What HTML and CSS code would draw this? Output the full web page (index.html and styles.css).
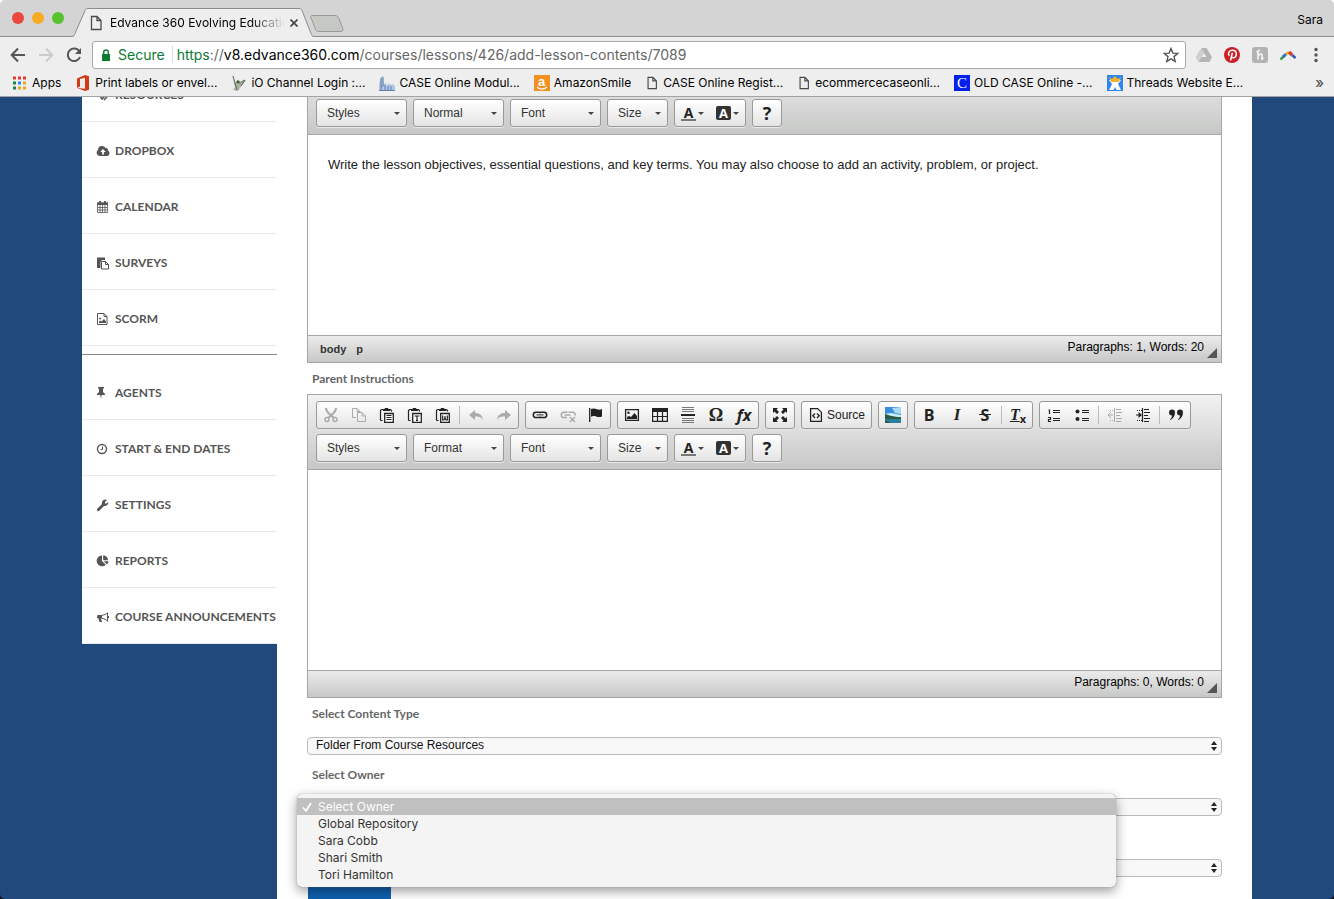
FILE: index.html
```html
<!DOCTYPE html>
<html lang="en">
<head>
    <meta charset="UTF-8">
    <meta name="viewport" content="width=device-width, initial-scale=1.0">
    <title>Edvance 360 Evolving Education</title>
    <link rel="stylesheet" href="styles.css">
</head>
<body>
<!-- editor icons -->
<svg class="sprite" xmlns="http://www.w3.org/2000/svg">
    <symbol id="page" viewBox="0 0 12 16"><path d="M1.5 1.5h5.500l4 4v9h-9.500zM7 1.500v4h4" fill="none" stroke="#4a4a4a" stroke-width="1.300"/></symbol>
    <symbol id="cut" viewBox="0 0 16 16"><path d="M3 1c0 3 2 5 5 7.500M13 1c0 3-2 5-5 7.500L5 11M8 8.500L11 11" fill="none" stroke="currentColor" stroke-width="2"/><circle cx="4" cy="12.500" r="2" fill="none" stroke="currentColor" stroke-width="1.400"/><circle cx="12" cy="12.500" r="2" fill="none" stroke="currentColor" stroke-width="1.400"/></symbol>
    <symbol id="copy" viewBox="0 0 16 16"><path d="M5 10.500H1.500v-9h4.500l3 3v1M6 1.500v3h3M6.500 5.500h4.500l3.500 3.500v5.500h-8zM11 5.500v3.500h3.500" fill="none" stroke="currentColor"/></symbol>
    <symbol id="clip" viewBox="0 0 16 16"><path d="M3.500 13.500h-1.500l-.5-.5V3.500l1-1h1.500M10 2.500h1.500l1 1v1" fill="none" stroke="currentColor" stroke-width="1.200"/><path d="M4 4V2h1.500l.5-1h3l.5 1H11v2z" fill="currentColor"/><path d="M5.700 6.500h8.600v8.800H5.700z" fill="#fff" stroke="currentColor" stroke-width="1.300"/></symbol>
    <symbol id="paste" viewBox="0 0 16 16"><use href="#clip"/><path d="M7.500 8.500h5M7.500 10.500h5M7.500 12.500h5" stroke="currentColor"/></symbol>
    <symbol id="paste-text" viewBox="0 0 16 16"><use href="#clip"/><path d="M7.500 9h5M10 9v5M9 13.500h2" stroke="currentColor" stroke-width="1.200"/></symbol>
    <symbol id="paste-word" viewBox="0 0 16 16"><use href="#clip"/><path d="M7.700 8.500v4.500h1.300l1-2 1 2h1.300V8.500M10 9v3" fill="none" stroke="currentColor" stroke-width="1.200"/></symbol>
    <symbol id="undo" viewBox="0 0 16 16"><path d="M1 8l6-5v3c5 0 7 2 8 7-2-3-4-4-8-3.500V13z" fill="currentColor"/></symbol>
    <symbol id="redo" viewBox="0 0 16 16"><path d="M15 8L9 3v3c-5 0-7 2-8 7 2-3 4-4 8-3.500V13z" fill="currentColor"/></symbol>
    <symbol id="link" viewBox="0 0 16 16"><g fill="none" stroke="currentColor" stroke-width="1.500"><path d="M7.500 5.200H4a2.500 2.500 0 0 0 0 5.400h3.500a2.500 2.500 0 0 0 1.500-.8M8.500 10.600H12a2.500 2.500 0 0 0 0-5.400H8.500a2.500 2.500 0 0 0-1.500.8"/><path d="M4.500 7.900h7" stroke-width="1"/></g></symbol>
    <symbol id="unlink" viewBox="0 0 16 16"><g fill="none" stroke="currentColor" stroke-width="1.500"><path d="M7.500 5.200H4a2.500 2.500 0 0 0 0 5.400h3M15 8.500a2.600 2.600 0 0 0-3-3.300H8.500M4.500 7.900h6M10 10l5 5M15 10l-5 5"/></g></symbol>
    <symbol id="flag" viewBox="0 0 16 16"><path d="M1.700 1v14" stroke="currentColor" stroke-width="1.300"/><path d="M3 2c2-1 4-.5 6 .2s3.500.5 5-.2v7.500c-2 1-4 .6-6 0s-3.500-.5-5 .3z" fill="currentColor"/></symbol>
    <symbol id="image" viewBox="0 0 16 16"><path d="M1.600 2.600h12.800v10.800H1.600z" fill="none" stroke="currentColor" stroke-width="1.300"/><circle cx="4.500" cy="5.700" r="1.200" fill="currentColor"/><path d="M3 12v-2l2-1 2 1 3.500-4 2.500 3v3z" fill="currentColor"/></symbol>
    <symbol id="table" viewBox="0 0 16 16"><path d="M0 1h16v4H0z" fill="currentColor"/><path d="M.6 2h14.800v12.400H.6zM.6 9.500h14.800M5.500 5v9.500M10.500 5v9.500" fill="none" stroke="currentColor" stroke-width="1.200"/></symbol>
    <symbol id="rule" viewBox="0 0 16 16"><path d="M2 .5h12M2 2.500h12M2 4.500h12M2 11.500h12M2 13.500h12M2 15.500h12" stroke="#777"/><path d="M1 8h14" stroke="currentColor" stroke-width="2"/></symbol>
    <symbol id="maximize" viewBox="0 0 16 16"><path d="M1 1h5L4.500 2.500 7 5 5 7 2.500 4.500 1 6zM15 1h-5l1.500 1.500L9 5l2 2 2.500-2.500L15 6zM1 15h5l-1.500-1.500L7 11 5 9l-2.500 2.500L1 10zM15 15h-5l1.500-1.500L9 11l2-2 2.500 2.500L15 10z" fill="currentColor"/></symbol>
    <symbol id="source" viewBox="0 0 16 16"><path d="M2.600 1.600h7l3.800 3.800v9H2.600z" fill="none" stroke="currentColor" stroke-width="1.300"/><path d="M7 6.500l-2.200 2.200L7 11M9 6.500l2.200 2.200L9 11" fill="none" stroke="currentColor" stroke-width="1.300"/></symbol>
    <symbol id="photo" viewBox="0 0 16 16"><path d="M0 0h16v16H0z" fill="#3b8ddf"/><path d="M7 1l9-1v7l-6-1z" fill="#a8dcf6"/><path d="M0 7l6-1 10 2v2H0z" fill="#c9ecf5"/><path d="M0 7c4 1 8 3 16 3v2H0z" fill="#2b5a46"/><path d="M0 12h16v4H0z" fill="#2b7f9c"/><path d="M0 13l6 3H0z" fill="#315c3f"/></symbol>
    <symbol id="numbers" viewBox="0 0 16 16"><path d="M7 3.500h7M7 5.500h7M7 11.500h7M7 13.500h7" stroke="currentColor"/><path d="M2.500 3h1v4M2 10.500h2.500v2H2.500v2H5" fill="none" stroke="currentColor" stroke-width="1.200"/></symbol>
    <symbol id="bullets" viewBox="0 0 16 16"><path d="M8 3.500h7M8 5.500h7M8 11.500h7M8 13.500h7" stroke="currentColor"/><circle cx="3.500" cy="4.500" r="2" fill="currentColor"/><circle cx="3.500" cy="12" r="2" fill="currentColor"/></symbol>
    <symbol id="outdent" viewBox="0 0 16 16"><path d="M7.500 1v14M9 2.500h5M9 5.500h6M9 8.500h4M9 11.500h6M9 14.500h5M1 8h5" stroke="currentColor"/><path d="M4 5L1 8l3 3" fill="none" stroke="currentColor"/><path d="M3 3.500h4M3 13.500h4" stroke="currentColor" stroke-dasharray="1 1"/></symbol>
    <symbol id="indent" viewBox="0 0 16 16"><path d="M7.500 1v14M9 2.500h5M9 5.500h6M9 8.500h4M9 11.500h6M9 14.500h5M1 8h4" stroke="currentColor" stroke-width="1.200"/><path d="M3.500 5l3.500 3-3.500 3z" fill="currentColor"/><path d="M2 3.500h5M2 13.500h5" stroke="currentColor" stroke-dasharray="1 1"/></symbol>
    <symbol id="quote" viewBox="0 0 16 16"><path d="M1 5.500a3 3 0 0 1 6 0c0 3-1.500 5.500-4.500 7.500l-.5-.6C3.500 11 4 10 4 8.500a3 3 0 0 1-3-3zM9 5.500a3 3 0 0 1 6 0c0 3-1.500 5.500-4.500 7.500l-.5-.6c1.500-1.400 2-2.400 2-3.900a3 3 0 0 1-3-3z" fill="currentColor"/></symbol>
</svg>

<div class="window">
    <header class="browser">
        <div class="tabstrip">
            <div class="lights"><i class="close"></i><i class="minimize"></i><i class="zoom"></i></div>
            <div class="tab">
                <svg class="tab-shape" viewBox="0 0 242 29"><path d="M0 28.500c2 0 2-1 3-3L13 2.500C14 1 14 .5 16 .5h211c2 0 2 .5 3 2l9 23c1 2 1 3 3 3V30H0z" fill="#eee" stroke="#8c8c8c"/></svg>
                <svg class="tab-page"><use href="#page"/></svg>
                <span class="tab-title">Edvance 360 Evolving Education</span>
                <button class="tab-close" aria-label="Close tab"><svg viewBox="0 0 8 8"><path d="M.5.5l7 7M7.500.5l-7 7" stroke="#444" stroke-width="1.600"/></svg></button>
            </div>
            <button class="new-tab" aria-label="New tab"><svg viewBox="0 0 34 17"><path d="M2 .5h23c2 0 3 1 4 3l4 11c0 1-.5 2-2 2H9c-2 0-3-1-3.500-2L1 2.500c-.5-1 0-2 1-2z" fill="#c6c8c4" stroke="#999"/></svg></button>
            <span class="profile">Sara</span>
        </div>
        <div class="navbar">
            <button aria-label="Back"><svg viewBox="0 0 16 16"><path d="M15 8H2M8 1.500L1.700 8 8 14.500" fill="none" stroke="#555" stroke-width="2"/></svg></button>
            <button aria-label="Forward"><svg viewBox="0 0 16 16"><path d="M1 8h13M8 1.500L14.300 8 8 14.500" fill="none" stroke="#ccc" stroke-width="2"/></svg></button>
            <button aria-label="Reload"><svg viewBox="0 0 16 16"><path d="M13.500 4.500A6.300 6.300 0 1 0 14 10" fill="none" stroke="#555" stroke-width="2"/><path d="M15 1v6H9z" fill="#555"/></svg></button>
            <div class="address">
                <svg class="lock" viewBox="0 0 10 12"><path d="M1 5h8v7H1z" fill="#0b7a33"/><path d="M2.700 5.500V3.300a2.300 2.300 0 0 1 4.600 0v2.200" fill="none" stroke="#0b7a33" stroke-width="1.400"/></svg>
                <span class="secure">Secure</span>
                <span class="url"><b>https</b>://<em>v8.edvance360.com</em>/courses/lessons/426/add-lesson-contents/7089</span>
                <button class="star" aria-label="Bookmark this page"><svg viewBox="0 0 16 16"><path d="M8 1.500l1.900 4.600 4.900.3-3.800 3.200 1.200 4.800L8 11.800l-4.200 2.600L5 9.600 1.200 6.400l4.900-.3z" fill="none" stroke="#555" stroke-width="1.400"/></svg></button>
            </div>
            <div class="extensions">
                <svg viewBox="0 0 16 16"><path d="M5.500 1h5L16 10l-2.500 5H2.500L0 10z" fill="#b5b5b5"/><path d="M5.500 1L8 5.500 3 15l-3-5z" fill="#cfcfcf"/><path d="M8 6l2.500 4h-5z" fill="#f0f0f0"/></svg>
                <svg viewBox="0 0 16 16"><circle cx="8" cy="8" r="8" fill="#cb2027"/><path d="M5.200 8.800C3.400 6 5.500 3.200 8.300 3.200c2.500 0 4 1.500 4 3.500 0 2.300-1.400 4-3.200 4-.9 0-1.500-.5-1.600-1M8.400 5.800L6.500 13.500" fill="none" stroke="#fff" stroke-width="1.500"/></svg>
                <svg viewBox="0 0 16 16"><rect width="16" height="16" rx="3" fill="#b3b3b3"/><path d="M6 3.500v9M6 9c1-2 4-3 4-.5V12l1.500-1M4.500 5L8 3" fill="none" stroke="#f2f2f2" stroke-width="1.700"/></svg>
                <svg viewBox="0 0 16 16"><path d="M.5 12.500L4 9" stroke="#3c9a46" stroke-width="2.500"/><path d="M3 10l3-3" stroke="#2c73d2" stroke-width="3"/><path d="M6 7l3-1.500" stroke="#e8b52c" stroke-width="3"/><path d="M9 5l3 3" stroke="#d8452e" stroke-width="3.500"/><path d="M12 8l3.500 3" stroke="#2b5fae" stroke-width="2.500"/></svg>
                <svg viewBox="0 0 16 16" fill="#555"><circle cx="8" cy="2.500" r="1.700"/><circle cx="8" cy="8" r="1.700"/><circle cx="8" cy="13.500" r="1.700"/></svg>
            </div>
        </div>
        <nav class="bookmarks">
            <a href="#"><svg viewBox="0 0 16 16"><g stroke-width="3" stroke-dasharray="3 2"><path d="M1 3h13" stroke="#e33b2e"/><path d="M1 8h3" stroke="#18854b"/><path d="M6 8h3" stroke="#2d86f0"/><path d="M11 8h3" stroke="#f0a31b"/><path d="M1 13h3" stroke="#18854b"/><path d="M6 13h8" stroke="#f0a31b"/></g></svg>Apps</a>
            <a href="#"><svg viewBox="0 0 16 16"><path d="M2 3.500L10 0l4 1.200v13.600L10 16l-8-3 8 .8V2.800L5 4v7.500L2 13z" fill="#d13b17"/></svg>Print labels or envel...</a>
            <a href="#"><svg viewBox="0 0 16 16"><path d="M1 1l2 6 4 2 8-4-6 8-2 3-5-1 2-3z" fill="#a9b5a4"/><path d="M2 1l2 7 2 7M8 8l6-3-4 6" stroke="#56664f" fill="none"/><circle cx="7" cy="7" r="1.700" fill="#475a36"/></svg>iO Channel Login :...</a>
            <a href="#"><svg viewBox="0 0 16 16"><path d="M0 16V9l2-7 2-1 1 8 2-1 1 3 2-3 2 2 2-1 2 2v5z" fill="#b2c7df"/><path d="M2 3v12M4 2v9l-2 1M6 10v5M9 11v4M12 11v4M0 15.500h16" stroke="#5f7fac" fill="none"/></svg>CASE Online Modul...</a>
            <a href="#"><svg viewBox="0 0 16 16"><path d="M0 0h16v16H0z" fill="#f29022"/><text x="4" y="11" font-family="Liberation Sans" font-size="13" font-weight="700" fill="#fff">a</text><path d="M3 12c3 2.500 7 2.500 10 0" stroke="#fff" fill="none" stroke-width="1.200"/></svg>AmazonSmile</a>
            <a href="#"><svg class="doc"><use href="#page"/></svg>CASE Online Regist...</a>
            <a href="#"><svg class="doc"><use href="#page"/></svg>ecommercecaseonli...</a>
            <a href="#"><svg viewBox="0 0 16 16"><path d="M0 0h16v16H0z" fill="#0420ee"/><text x="3" y="13" font-family="Liberation Serif" font-size="15" fill="#fff">C</text></svg>OLD CASE Online -...</a>
            <a href="#"><svg viewBox="0 0 16 16"><path d="M0 0h16v16H0z" fill="#2e86ee"/><path d="M2 5h12l-3 4 3 6H9.500L8 12l-1.500 3H2l3-6z" fill="#fff"/><path d="M2 2l3 2 3-3 3 3 3-2-2 5H4z" fill="#f2b233"/></svg>Threads Website E...</a>
            <button class="more" aria-label="More bookmarks">»</button>
        </nav>
    </header>

    <div class="viewport">
        <div class="container">
            <nav class="sidebar">
                <ul>
                    <li><a href="#"><svg viewBox="0 0 14 14"><path d="M2 5l3-3h6v4l-5 5zM8 12l3-3" fill="none" stroke="currentColor" stroke-width="1.500"/></svg>Resources</a></li>
                    <li><a href="#"><svg viewBox="0 0 14 14"><path d="M3.500 12A3.300 3.300 0 0 1 2 6a4 4 0 0 1 7.500-2A2.300 2.300 0 0 1 12 6.500a3 3 0 0 1-.7 5.500z" fill="currentColor"/><path d="M7 5L4.200 8h1.900v2.500h1.800V8h1.900z" fill="#fff"/></svg>Dropbox</a></li>
                    <li><a href="#"><svg viewBox="0 0 14 14"><path d="M1 2.500h11v2.500H1z" fill="currentColor"/><path d="M1.500 3h10v9.500h-10zM1.500 7.500h10M1.500 10h10M4 5v7.500M6.500 5v7.500M9 5v7.500" fill="none" stroke="currentColor" stroke-width=".8"/><path d="M4 1v3M9 1v3" stroke="currentColor" stroke-width="1.800"/></svg>Calendar</a></li>
                    <li><a href="#"><svg viewBox="0 0 14 14"><path d="M1 1.500h8V4H6L4.500 6v6H1z" fill="currentColor"/><path d="M5.500 5.500h4l3 3v4.500h-7zM9.500 5.500v3h3" fill="#fff" stroke="currentColor"/></svg>Surveys</a></li>
                    <li><a href="#"><svg viewBox="0 0 14 14"><path d="M1.500 1.500h6.500l3 3v8h-9.500zM8 1.500v3h3" fill="none" stroke="currentColor"/><path d="M3 11V9.500l1.500-1 1 1L8 7l2 2.500V11z" fill="currentColor"/><circle cx="4" cy="6.500" r="1" fill="currentColor"/></svg>Scorm</a></li>
                </ul>
                <ul class="tools">
                    <li><a href="#"><svg viewBox="0 0 14 14"><path d="M2 1h6v1.200l-1 .6V6l2 2v1H5.700L5 13l-.7-4H1V8l2-2V2.800l-1-.6z" fill="currentColor"/></svg>Agents</a></li>
                    <li><a href="#"><svg viewBox="0 0 14 14"><circle cx="6" cy="7" r="4.500" fill="none" stroke="currentColor" stroke-width="1.400"/><path d="M6.500 4.500v3h-2" fill="none" stroke="currentColor"/></svg>Start &amp; End Dates</a></li>
                    <li><a href="#"><svg viewBox="0 0 14 14"><path d="M1 11L6 6a3.500 3.500 0 0 1 5-4L9 4v1.500h1.500l1.700-1.500A3.500 3.500 0 0 1 8 8l-5 5c-1 .8-2.800-1-2-2z" fill="currentColor"/></svg>Settings</a></li>
                    <li><a href="#"><svg viewBox="0 0 14 14"><path d="M6 1.500V7l3.800 3.800A5.400 5.400 0 1 1 6 1.500z" fill="currentColor"/><path d="M7.200 1.300a5 5 0 0 1 4.800 5H7.200zM7.800 7.300H12.500a5 5 0 0 1-1.500 3.200z" fill="currentColor"/></svg>Reports</a></li>
                    <li><a href="#"><svg viewBox="0 0 14 14"><path d="M2 5h4v3.500H5l1 3.500H3.500L2.500 8.500H2c-1.300 0-1.300-3.500 0-3.500z" fill="currentColor"/><path d="M6 5.200c2 0 4-1 5.500-2.500v8.500C10 9.500 8 8.600 6 8.400M12.500 6v2" fill="none" stroke="currentColor"/></svg>Course Announcements</a></li>
                </ul>
            </nav>

            <main class="main">
                <form>
                    <div class="editor">
                        <div class="toolbar">
                            <div class="row">
                                <span class="combo"><select aria-label="Styles"><option>Styles</option></select></span>
                                <span class="combo"><select aria-label="Paragraph format"><option>Normal</option></select></span>
                                <span class="combo"><select aria-label="Font name"><option>Font</option></select></span>
                                <span class="combo small"><select aria-label="Font size"><option>Size</option></select></span>
                                <div class="group">
                                    <button type="button" class="color" aria-label="Text color"><span class="fore">A</span></button>
                                    <button type="button" class="color" aria-label="Background color"><span class="back">A</span></button>
                                </div>
                                <div class="group"><button type="button" class="help">?</button></div>
                            </div>
                        </div>
                        <textarea aria-label="Student instructions">Write the lesson objectives, essential questions, and key terms. You may also choose to add an activity, problem, or project.</textarea>
                        <div class="statusbar">
                            <div class="path"><a href="#">body</a><a href="#">p</a></div>
                            <span>Paragraphs: 1, Words: 20</span>
                            <i class="resizer"></i>
                        </div>
                    </div>

                    <label class="title" for="parent">Parent Instructions</label>
                    <div class="editor">
                        <div class="toolbar">
                            <div class="row">
                                <div class="group">
                                    <button type="button" aria-label="Cut" disabled><svg><use href="#cut"/></svg></button>
                                    <button type="button" aria-label="Copy" disabled><svg><use href="#copy"/></svg></button>
                                    <button type="button" aria-label="Paste"><svg><use href="#paste"/></svg></button>
                                    <button type="button" aria-label="Paste as text"><svg><use href="#paste-text"/></svg></button>
                                    <button type="button" aria-label="Paste from Word"><svg><use href="#paste-word"/></svg></button>
                                    <i class="sep"></i>
                                    <button type="button" aria-label="Undo" disabled><svg><use href="#undo"/></svg></button>
                                    <button type="button" aria-label="Redo" disabled><svg><use href="#redo"/></svg></button>
                                </div>
                                <div class="group">
                                    <button type="button" aria-label="Link"><svg><use href="#link"/></svg></button>
                                    <button type="button" aria-label="Unlink" disabled><svg><use href="#unlink"/></svg></button>
                                    <button type="button" aria-label="Anchor"><svg><use href="#flag"/></svg></button>
                                </div>
                                <div class="group">
                                    <button type="button" aria-label="Image"><svg><use href="#image"/></svg></button>
                                    <button type="button" aria-label="Table"><svg><use href="#table"/></svg></button>
                                    <button type="button" aria-label="Horizontal line"><svg><use href="#rule"/></svg></button>
                                    <button type="button" class="omega">Ω</button>
                                    <button type="button" class="fx">fx</button>
                                </div>
                                <div class="group"><button type="button" aria-label="Maximize"><svg><use href="#maximize"/></svg></button></div>
                                <div class="group"><button type="button" class="source"><svg><use href="#source"/></svg>Source</button></div>
                                <div class="group"><button type="button" aria-label="Insert photo"><svg><use href="#photo"/></svg></button></div>
                                <div class="group">
                                    <button type="button" class="bold">B</button>
                                    <button type="button" class="italic">I</button>
                                    <button type="button" class="strike">S</button>
                                    <i class="sep"></i>
                                    <button type="button" class="clear" aria-label="Remove format"><span>T</span><sub>x</sub></button>
                                </div>
                                <div class="group">
                                    <button type="button" aria-label="Numbered list"><svg><use href="#numbers"/></svg></button>
                                    <button type="button" aria-label="Bulleted list"><svg><use href="#bullets"/></svg></button>
                                    <i class="sep"></i>
                                    <button type="button" aria-label="Decrease indent" disabled><svg><use href="#outdent"/></svg></button>
                                    <button type="button" aria-label="Increase indent"><svg><use href="#indent"/></svg></button>
                                    <i class="sep"></i>
                                    <button type="button" aria-label="Block quote"><svg><use href="#quote"/></svg></button>
                                </div>
                            </div>
                            <div class="row">
                                <span class="combo"><select aria-label="Styles"><option>Styles</option></select></span>
                                <span class="combo"><select aria-label="Paragraph format"><option>Format</option></select></span>
                                <span class="combo"><select aria-label="Font name"><option>Font</option></select></span>
                                <span class="combo small"><select aria-label="Font size"><option>Size</option></select></span>
                                <div class="group">
                                    <button type="button" class="color" aria-label="Text color"><span class="fore">A</span></button>
                                    <button type="button" class="color" aria-label="Background color"><span class="back">A</span></button>
                                </div>
                                <div class="group"><button type="button" class="help">?</button></div>
                            </div>
                        </div>
                        <textarea id="parent"></textarea>
                        <div class="statusbar">
                            <div class="path"></div>
                            <span>Paragraphs: 0, Words: 0</span>
                            <i class="resizer"></i>
                        </div>
                    </div>

                    <label class="title" for="type">Select Content Type</label>
                    <div class="field">
                        <select id="type"><option>Folder From Course Resources</option></select>
                    </div>
                    <label class="title" for="owner">Select Owner</label>
                    <div class="field">
                        <select id="owner"><option></option></select>
                        <ul class="menu" role="listbox" aria-label="Owner">
                            <li class="selected" role="option" aria-selected="true"><svg viewBox="0 0 10 10"><path d="M1 5.500L4 9l5-8" fill="none" stroke="#fff" stroke-width="1.800"/></svg>Select Owner</li>
                            <li role="option">Global Repository</li>
                            <li role="option">Sara Cobb</li>
                            <li role="option">Shari Smith</li>
                            <li role="option">Tori Hamilton</li>
                        </ul>
                    </div>
                    <div class="field folder">
                        <select aria-label="Folder"><option></option></select>
                    </div>
                    <button class="submit" aria-label="Submit"></button>
                </form>
            </main>
        </div>
    </div>
</div>
</body>
</html>
```
FILE: styles.css
```css
* {
    box-sizing: border-box;
}
html {
    background: linear-gradient(#fff 50%, #111 50%);
}
body {
    margin: 0;
    font-family: "Liberation Sans", Arial, sans-serif;
    font-size: 12px;
    color: #000;
}
button {
    padding: 0;
    border: 0;
    background: none;
    font: inherit;
    color: inherit;
}
ul {
    list-style: none;
    margin: 0;
    padding: 0;
}
a {
    color: inherit;
    text-decoration: none;
}
.sprite {
    display: none;
}
.window {
    display: flex;
    flex-direction: column;
    height: 100vh;
    overflow: hidden;
    border-radius: 5px;
}

/* browser */
.browser {
    flex: none;
    background: #eee;
    border-bottom: 1px solid #a3a3a3;
    font-family: Inter, sans-serif;
}
.tabstrip {
    display: flex;
    align-items: center;
    height: 37px;
    padding-right: 11px;
    background: #d4d4d4;
    border-bottom: 1px solid #8c8c8c;
}
.lights {
    display: flex;
    gap: 8px;
    padding-left: 12px;
    width: 72px;
}
.lights i {
    width: 12px;
    height: 12px;
    border-radius: 50%;
}
.close {
    background: #ec4640;
}
.minimize {
    background: #f8ac23;
}
.zoom {
    background: #55c22e;
}
.tab {
    position: relative;
    display: flex;
    align-items: center;
    align-self: flex-end;
    width: 242px;
    height: 28px;
    padding: 1px 16px 0 18px;
}
.tab-shape {
    position: absolute;
    left: 0;
    top: 0;
    width: 242px;
    height: 29px;
}
.tab-page,
.tab-title,
.tab-close {
    position: relative;
}
.tab-page {
    flex: none;
    width: 12px;
    height: 16px;
}
.tab-title {
    flex: 1;
    margin-left: 8px;
    overflow: hidden;
    white-space: nowrap;
    -webkit-mask-image: linear-gradient(90deg, #000 80%, transparent);
    mask-image: linear-gradient(90deg, #000 80%, transparent);
}
.tab-close {
    margin-left: 5px;
}
.tab-close svg {
    display: block;
    width: 8px;
    height: 8px;
}
.new-tab {
    margin: 11px 0 0 -4px;
}
.new-tab svg {
    display: block;
    width: 34px;
    height: 17px;
}
.profile {
    margin-left: auto;
    padding-top: 2px;
}
.navbar {
    display: flex;
    align-items: center;
    gap: 12px;
    padding: 4px 10px 0;
}
.navbar svg {
    display: block;
    width: 16px;
    height: 16px;
}
.address {
    flex: 1;
    display: flex;
    align-items: center;
    height: 28px;
    margin: 0 -2px;
    padding: 0 6px 1px 8px;
    background: #fff;
    border: 1px solid #a8a8a8;
    border-radius: 3px;
    font-size: 14px;
}
.address .lock {
    width: 10px;
    height: 12px;
}
.secure {
    margin-left: 7px;
    padding-right: 7px;
    border-right: 1px solid #ddd;
    color: #0b7a33;
}
.url {
    flex: 1;
    margin-left: 4px;
    color: #666;
}
.url b {
    font-weight: 400;
    color: #0b7a33;
}
.url em {
    font-style: normal;
    color: #000;
}
.extensions {
    display: flex;
    gap: 12px;
}
.bookmarks {
    display: flex;
    align-items: center;
    gap: 14px;
    height: 27px;
    padding: 0 10px 0 12px;
}
.bookmarks a {
    display: flex;
    align-items: center;
    gap: 4px;
    white-space: nowrap;
}
.bookmarks svg {
    width: 16px;
    height: 16px;
}
.bookmarks .doc {
    width: 14px;
    height: 14px;
}
.more {
    margin-left: auto;
    font-size: 15px;
    color: #444;
}

/* page, scrolled down a little */
.viewport {
    flex: 1;
    overflow: hidden;
    background: #21497b;
}
.container {
    display: flex;
    align-items: flex-start;
    max-width: 1170px;
    margin: -38px auto 0;
}
.sidebar {
    flex: none;
    width: 195px;
    padding-top: 7px;
    background: #fff;
    font-family: Lato, sans-serif;
    font-size: 12px;
    font-weight: 700;
    color: #555;
    text-transform: uppercase;
}
.sidebar li {
    margin-right: 1px;
    padding: 20px 0 17px 14px;
    border-bottom: 1px solid #e8e8e8;
    line-height: 18px;
    white-space: nowrap;
}
.sidebar a {
    display: flex;
    align-items: center;
    gap: 5px;
}
.sidebar svg {
    flex: none;
    width: 14px;
    height: 14px;
}
.sidebar .tools {
    margin-top: 8px;
    padding-top: 9px;
    border-top: 1px solid #888;
}
.main {
    flex: 1;
    min-width: 0;
    padding: 0 30px 40px;
    background: #fff;
}

/* editor */
.editor {
    border: 1px solid #a6a6a6;
}
.toolbar {
    display: flex;
    flex-direction: column;
    justify-content: flex-end;
    gap: 5px;
    min-height: 75px;
    padding: 6px 8px 7px;
    background: linear-gradient(#f2f2f2, #c6c8c6);
    border-bottom: 1px solid #a6a6a6;
}
.row {
    display: flex;
    gap: 6px;
}
.group,
.combo {
    display: flex;
    align-items: center;
    height: 28px;
    border: 1px solid #999;
    border-radius: 3px;
    background: linear-gradient(#fff, #e4e4e4);
    box-shadow: 0 1px 0 #e8e8e8;
    color: #222;
}
.group button {
    display: flex;
    align-items: center;
    justify-content: center;
    width: 28px;
    height: 26px;
}
.group svg {
    width: 16px;
    height: 16px;
}
.group button:disabled {
    color: #aaa;
}
.sep {
    width: 1px;
    height: 18px;
    margin: 0 2px;
    background: #bbb;
}
.combo {
    position: relative;
    width: 91px;
}
.combo.small {
    width: 61px;
}
.combo select {
    appearance: none;
    width: 100%;
    height: 26px;
    padding: 0 20px 0 10px;
    border: 0;
    background: none;
    font: 12px "Liberation Sans", Arial, sans-serif;
    color: #333;
}
.combo::after,
.color::after {
    content: "";
    border: 3px solid transparent;
    border-top-color: #444;
    border-bottom: 0;
}
.combo::after {
    position: absolute;
    right: 6px;
    top: 12px;
}
.group .color {
    width: 35px;
    gap: 2px;
}
.fore,
.back {
    width: 15px;
    height: 15px;
    font: 700 14px/13px "Open Sans", sans-serif;
}
.fore {
    border-bottom: 2px solid #777;
}
.back {
    height: 14px;
    border-radius: 2px;
    background: #333;
    color: #fff;
    font-size: 13px;
    line-height: 14px;
}
.group .help {
    font: 700 18px "Open Sans", sans-serif;
}
.group .omega {
    font: 700 18px "Liberation Serif", serif;
}
.group .fx {
    font: italic 700 16px "Open Sans", sans-serif;
}
.group .source {
    width: 69px;
    gap: 3px;
}
.group .bold {
    font: 700 16px "Open Sans", sans-serif;
}
.group .italic {
    font: italic 700 17px "Liberation Serif", serif;
}
.group .strike {
    position: relative;
    font: 700 16px "Open Sans", sans-serif;
}
.strike::after {
    content: "";
    position: absolute;
    left: 8px;
    right: 8px;
    top: 12px;
    border-top: 1px solid #222;
}
.group .clear {
    font: italic 700 16px "Liberation Serif", serif;
}
.clear span {
    text-decoration: underline;
}
.clear sub {
    font: 700 11px "Open Sans", sans-serif;
    padding-top: 6px;
}
textarea {
    display: block;
    width: 100%;
    height: 200px;
    padding: 20px;
    border: 0;
    outline: 0;
    resize: none;
    font: 13px/20px "Liberation Sans", Arial, sans-serif;
    color: #222;
}
.statusbar {
    display: flex;
    height: 27px;
    padding: 0 4px 0 12px;
    border-top: 1px solid #a6a6a6;
    background: linear-gradient(#ebebeb, #c6c8c6);
    line-height: 22px;
}
.path {
    flex: 1;
    display: flex;
    gap: 10px;
    font-size: 11px;
    font-weight: 700;
    line-height: 27px;
    color: #333;
}
.resizer {
    align-self: flex-end;
    margin: 0 0 4px 3px;
    border: 5px solid transparent;
    border-right-color: #555;
    border-bottom-color: #555;
}

/* form fields */
.title {
    display: block;
    padding-left: 5px;
    font: 700 12px/31px Lato, sans-serif;
    color: #666;
}
.field {
    position: relative;
    margin: 8px 0 4px;
}
.field select {
    display: block;
    appearance: none;
    width: 100%;
    height: 18px;
    padding: 0 20px 2px 8px;
    border: 1px solid #bbb;
    border-radius: 4px;
    background: #f8f8f8;
    font: 12px "Liberation Sans", Arial, sans-serif;
    color: #111;
}
.field::before,
.field::after {
    content: "";
    position: absolute;
    right: 5px;
    border: 3px solid transparent;
}
.field::before {
    top: 4px;
    border-bottom: 4px solid #222;
    border-top: 0;
}
.field::after {
    top: 10px;
    border-top: 4px solid #222;
    border-bottom: 0;
}
.folder {
    margin-top: 43px;
}
.menu {
    position: absolute;
    z-index: 1;
    left: -10px;
    right: 106px;
    top: -4px;
    padding: 4px 0;
    border-radius: 5px;
    background: #f4f4f4;
    box-shadow: 0 0 1px #777, 0 4px 12px rgba(0, 0, 0, .4);
    font-family: Inter, sans-serif;
    color: #333;
}
.menu li {
    display: flex;
    align-items: center;
    height: 17px;
    padding-left: 21px;
}
.menu .selected {
    gap: 6px;
    padding-left: 5px;
    background: #c0c0c0;
    color: #fff;
}
.menu svg {
    width: 10px;
    height: 10px;
}
.submit {
    display: block;
    width: 83px;
    height: 36px;
    margin: 5px 0 0 1px;
    background: #0f61b0;
}
```
